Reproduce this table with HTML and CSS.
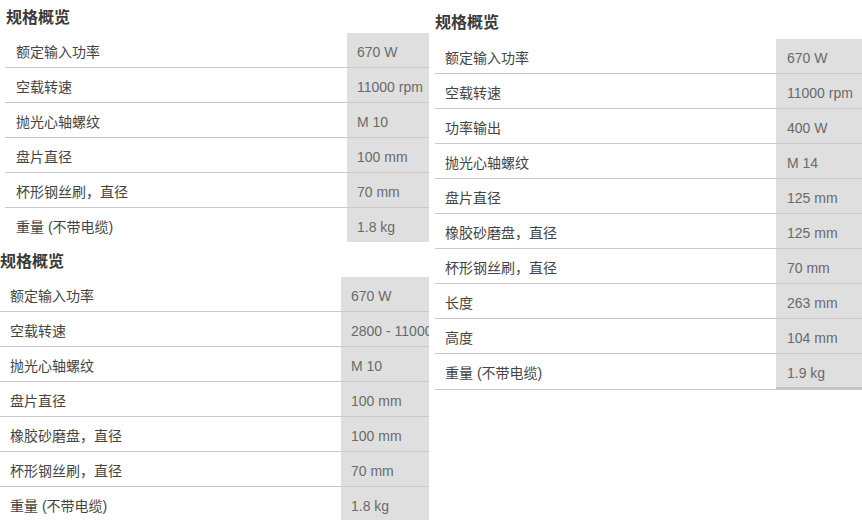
FILE: index.html
```html
<!DOCTYPE html>
<html lang="zh-CN">
<head>
<meta charset="utf-8">
<title>规格概览</title>
<link rel="stylesheet" href="styles.css">
</head>
<body>
<div class="page">
  <div class="col-left">
    <section class="spec spec-a">
      <h3 class="spec-title">规格概览</h3>
      <div class="row"><span class="k">额定输入功率</span><span class="v">670 W</span></div>
      <div class="row"><span class="k">空载转速</span><span class="v">11000 rpm</span></div>
      <div class="row"><span class="k">抛光心轴螺纹</span><span class="v">M 10</span></div>
      <div class="row"><span class="k">盘片直径</span><span class="v">100 mm</span></div>
      <div class="row"><span class="k">杯形钢丝刷，直径</span><span class="v">70 mm</span></div>
      <div class="row last"><span class="k">重量 (不带电缆)</span><span class="v">1.8 kg</span></div>
    </section>
    <section class="spec spec-b">
      <h3 class="spec-title">规格概览</h3>
      <div class="row"><span class="k">额定输入功率</span><span class="v">670 W</span></div>
      <div class="row"><span class="k">空载转速</span><span class="v">2800 - 11000 rpm</span></div>
      <div class="row"><span class="k">抛光心轴螺纹</span><span class="v">M 10</span></div>
      <div class="row"><span class="k">盘片直径</span><span class="v">100 mm</span></div>
      <div class="row"><span class="k">橡胶砂磨盘，直径</span><span class="v">100 mm</span></div>
      <div class="row"><span class="k">杯形钢丝刷，直径</span><span class="v">70 mm</span></div>
      <div class="row last"><span class="k">重量 (不带电缆)</span><span class="v">1.8 kg</span></div>
    </section>
  </div>
  <div class="col-right">
    <section class="spec spec-c">
      <h3 class="spec-title">规格概览</h3>
      <div class="row"><span class="k">额定输入功率</span><span class="v">670 W</span></div>
      <div class="row"><span class="k">空载转速</span><span class="v">11000 rpm</span></div>
      <div class="row"><span class="k">功率输出</span><span class="v">400 W</span></div>
      <div class="row"><span class="k">抛光心轴螺纹</span><span class="v">M 14</span></div>
      <div class="row"><span class="k">盘片直径</span><span class="v">125 mm</span></div>
      <div class="row"><span class="k">橡胶砂磨盘，直径</span><span class="v">125 mm</span></div>
      <div class="row"><span class="k">杯形钢丝刷，直径</span><span class="v">70 mm</span></div>
      <div class="row"><span class="k">长度</span><span class="v">263 mm</span></div>
      <div class="row"><span class="k">高度</span><span class="v">104 mm</span></div>
      <div class="row end"><span class="k">重量 (不带电缆)</span><span class="v">1.9 kg</span></div>
    </section>
  </div>
</div>
</body>
</html>
```

FILE: styles.css
```css
html, body {
  margin: 0;
  padding: 0;
  background: #ffffff;
}

body {
  font-family: "Liberation Sans", "Noto Sans CJK SC", sans-serif;
  font-size: 14px;
  color: #444444;
  width: 862px;
  height: 520px;
  overflow: hidden;
}

.page {
  display: flex;
  align-items: flex-start;
}

.col-left {
  width: 435px;
  flex: none;
  display: flex;
  flex-direction: column;
}

.col-right {
  width: 427px;
  flex: none;
}

.spec-title {
  margin: 0;
  font-family: "Noto Sans CJK SC", sans-serif;
  font-size: 16px;
  font-weight: 700;
  line-height: 22px;
  color: #3a3a3a;
  box-sizing: border-box;
}

.spec-a {
  margin-left: 5px;
  width: 424px;
}
.spec-a .spec-title {
  height: 33px;
  padding: 5px 0 0 1px;
}

.spec-b {
  width: 429px;
}
.spec-b .spec-title {
  height: 35px;
  padding-top: 7px;
}

.spec-c {
  width: 427px;
}
.spec-c .spec-title {
  height: 39px;
  padding-top: 10px;
}

.row {
  display: grid;
  border-bottom: 1px solid #c9c9c9;
  height: 35px;
  box-sizing: border-box;
}
.row.last {
  border-bottom: none;
  height: 34px;
}

.spec-a .row { grid-template-columns: 342px 82px; }
.spec-b .row { grid-template-columns: 341px 88px; }
.spec-c .row { grid-template-columns: 341px 86px; }

.k, .v {
  line-height: 20px;
  padding-top: 9px;
  white-space: nowrap;
  overflow: hidden;
}

.k {
  padding-left: 11px;
  font-family: "Liberation Sans", "Noto Sans CJK SC", sans-serif;
  color: #444444;
}
.spec-b .k, .spec-c .k {
  padding-left: 10px;
}

.v {
  background: #dfdfdf;
  color: #6a6a6a;
  padding-left: 10px;
}
.spec-c .v {
  padding-left: 11px;
}

.row.end {
  height: 36px;
}
.row.end .v {
  box-shadow: inset 0 -2px 0 #c2c2c2;
}
```
